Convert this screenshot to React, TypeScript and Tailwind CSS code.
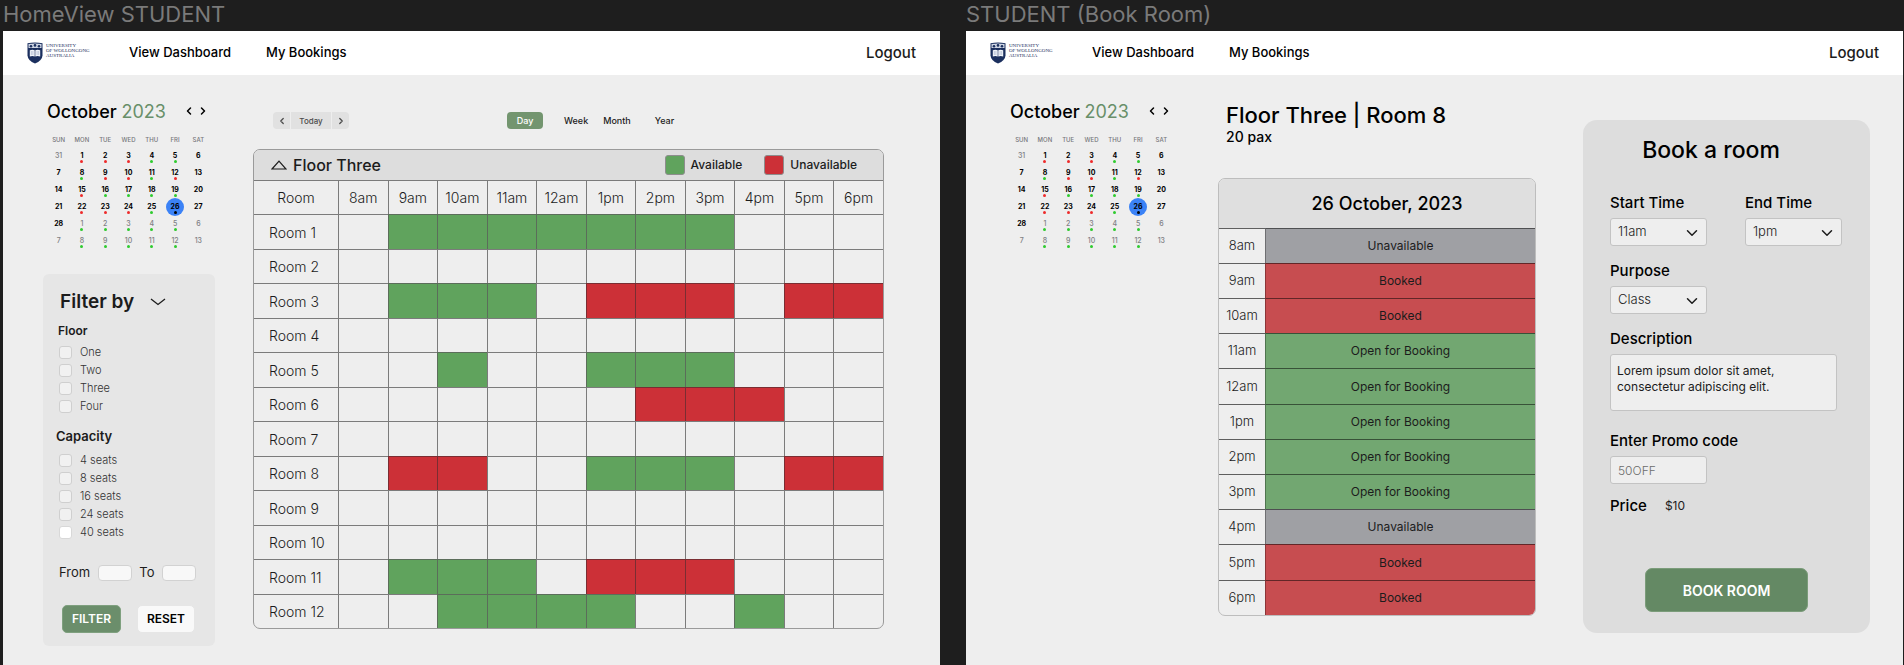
import { ReactNode } from "react";
import { ChevronDown, ChevronLeft, ChevronRight } from "lucide-react";

const hours = ["8am", "9am", "10am", "11am", "12am", "1pm", "2pm", "3pm", "4pm", "5pm", "6pm"];

// One character per hour: "g" is available, "r" is unavailable, "." is empty.
const rooms = [
  ".ggggggg...",
  "...........",
  ".ggg.rrr.rr",
  "...........",
  "..g..ggg...",
  "......rrr..",
  "...........",
  ".rr..ggg.rr",
  "...........",
  "...........",
  ".ggg.rrr...",
  "..gggg..g..",
];

const cellColour: Record<string, string> = {
  g: "border-[#5b6d5a] bg-[#60a35d]",
  r: "border-[#7a2d32] bg-[#cc3037]",
  ".": "border-[#7b7b7b]",
};

type Slot = "Unavailable" | "Booked" | "Open for Booking";

const slots: Slot[] = [
  "Unavailable",
  "Booked",
  "Booked",
  "Open for Booking",
  "Open for Booking",
  "Open for Booking",
  "Open for Booking",
  "Open for Booking",
  "Unavailable",
  "Booked",
  "Booked",
];

const slotColour: Record<Slot, string> = {
  Unavailable: "bg-[#9fa0a4]",
  Booked: "bg-[#c74d50]",
  "Open for Booking": "bg-[#72a771]",
};

const weekdays = ["SUN", "MON", "TUE", "WED", "THU", "FRI", "SAT"];

const weeks = [
  { days: [31, 1, 2, 3, 4, 5, 6], dots: ".rrrgg." },
  { days: [7, 8, 9, 10, 11, 12, 13], dots: ".grrgr." },
  { days: [14, 15, 16, 17, 18, 19, 20], dots: ".rgggg." },
  { days: [21, 22, 23, 24, 25, 26, 27], dots: ".rrrgk." },
  { days: [28, 1, 2, 3, 4, 5, 6], dots: ".ggggg." },
  { days: [7, 8, 9, 10, 11, 12, 13], dots: ".ggggg." },
];

const dotColour: Record<string, string> = {
  r: "bg-[#ee2b2b]",
  g: "bg-[#2fcb2f]",
  k: "bg-black",
};

function isOtherMonth(week: number, day: number) {
  return (week === 0 && day === 31) || (week === 4 && day < 28) || week === 5;
}

function Logo() {
  return (
    <div className="flex w-[69px] items-start gap-[3px] text-[#1b2f5e]">
      <svg viewBox="0 0 16 22" className="h-[22px] w-4 shrink-0" aria-hidden="true">
        <path d="M.5 1.2Q8-.2 15.500 1.200V13.500Q15.200 18.500 8 21.500Q.8 18.500.5 13.500Z" fill="#1b2f5e" />
        <path d="M1.500 2.100Q8 .9 14.500 2.100V6H1.500Z" fill="#cfd6e4" />
        <circle cx="4" cy="4.200" r="1.300" fill="#1b2f5e" />
        <circle cx="8" cy="3.400" r="1.300" fill="#1b2f5e" />
        <circle cx="12" cy="4.200" r="1.300" fill="#1b2f5e" />
        <path d="M2.800 8.200Q5.500 7.200 7.700 8.200V14.500Q5.500 13.600 2.800 14.500ZM8.300 8.200Q10.500 7.200 13.200 8.200V14.500Q10.500 13.600 8.300 14.500Z" fill="#f1f4f9" />
        <path d="M4.300 9V13M5.900 9V13M10.100 9V13M11.700 9V13" stroke="#8c9abb" strokeWidth=".5" />
      </svg>
      <p className="pt-px font-['Liberation_Serif',serif] text-[5px] leading-[5px] whitespace-nowrap">
        UNIVERSITY
        <br />
        OF WOLLONGONG
        <br />
        AUSTRALIA
      </p>
    </div>
  );
}

function Frame({ title, children }: { title: string; children: ReactNode }) {
  return (
    <section className="flex min-w-0 flex-1 flex-col">
      <h2 className="h-[31px] text-[22px] leading-7 text-[#7a7a7a]">{title}</h2>
      <div className="flex flex-1 flex-col bg-[#eeeeee]">
        <header className="flex h-11 items-center bg-white pr-6 pl-6 text-[13px] font-medium text-black">
          <Logo />
          <nav className="flex flex-1 gap-[35px] pl-[33px]">
            <a href="#dashboard">View Dashboard</a>
            <a href="#bookings">My Bookings</a>
          </nav>
          <a href="#logout" className="text-[15px] text-[#1c1c1c]">
            Logout
          </a>
        </header>
        {children}
      </div>
    </section>
  );
}

function Calendar() {
  return (
    <div className="pt-6">
      <div className="flex h-6 items-center pl-1">
        <h3 className="text-[18px] font-medium text-black">
          October <span className="font-normal text-[#688f69]">2023</span>
        </h3>
        <div className="ml-auto flex gap-0.5 pr-1.5">
          <button aria-label="Previous month">
            <ChevronLeft className="size-3 text-black" strokeWidth={3} />
          </button>
          <button aria-label="Next month">
            <ChevronRight className="size-3 text-black" strokeWidth={3} />
          </button>
        </div>
      </div>
      <table className="mt-2.5 ml-1 w-[163px] table-fixed border-separate border-spacing-0 text-center text-[7px] leading-[14px]">
        <thead>
          <tr className="h-3.5 text-[6px] text-[#77777b]">
            {weekdays.map((d) => (
              <th key={d} className="p-0 font-medium">
                {d}
              </th>
            ))}
          </tr>
        </thead>
        <tbody>
          {weeks.map((week, w) => (
            <tr key={w} className="h-[17px]">
              {week.days.map((day, i) => {
                const dot = dotColour[week.dots[i]];
                return (
                  <td
                    key={i}
                    className={
                      isOtherMonth(w, day)
                        ? "relative p-0 font-medium text-[#808084]"
                        : "relative p-0 font-bold text-black"
                    }
                  >
                    {day === 26 && (
                      <span className="absolute inset-x-0 top-0 mx-auto size-[18px] rounded-full bg-[#3b82f6]" />
                    )}
                    <span className="relative block">{day}</span>
                    {dot && (
                      <span className={`absolute inset-x-0 bottom-px mx-auto size-[3px] rounded-full ${dot}`} />
                    )}
                  </td>
                );
              })}
            </tr>
          ))}
        </tbody>
      </table>
    </div>
  );
}

function CheckList({ items, lastWhite = false }: { items: string[]; lastWhite?: boolean }) {
  return (
    <ul className="pl-4">
      {items.map((item, i) => (
        <li key={item}>
          <label className="flex h-[18px] items-center gap-2 text-[11px] font-light text-[#333333]">
            <input
              type="checkbox"
              className={
                lastWhite && i === items.length - 1
                  ? "size-[13px] appearance-none rounded-[3px] border border-[#d8d8d8] bg-white"
                  : "size-[13px] appearance-none rounded-[3px] border border-[#cfcfcf] bg-[#f1f1f1]"
              }
            />
            {item}
          </label>
        </li>
      ))}
    </ul>
  );
}

function FilterPanel() {
  return (
    <form className="mt-[25px] rounded-md bg-[#e6e6e6] pt-[17px] pb-[13px] text-[#1c1c1c]">
      <div className="flex h-[22px] items-center gap-4 pl-[17px]">
        <h3 className="text-[19px] font-semibold">Filter by</h3>
        <button type="button" aria-label="Collapse filters">
          <svg viewBox="0 0 16 8" className="h-2 w-4" fill="none" stroke="currentColor" strokeWidth="1.300">
            <path d="M1 1L8 6.500L15 1" />
          </svg>
        </button>
      </div>
      <h4 className="mt-2.5 mb-1 pl-[15px] text-[12px] leading-4 font-semibold">Floor</h4>
      <CheckList items={["One", "Two", "Three", "Four"]} />
      <h4 className="mt-[13px] mb-[7px] pl-[13px] text-[13px] leading-4 font-semibold">Capacity</h4>
      <CheckList items={["4 seats", "8 seats", "16 seats", "24 seats", "40 seats"]} lastWhite />
      <div className="mt-6 flex h-4 items-center justify-between pr-[19px] pl-4 text-[13px]">
        <label htmlFor="from">From</label>
        <input id="from" className="h-4 w-[34px] rounded border border-[#d2d2d2] bg-[#f8f8f8] px-1" />
        <label htmlFor="to">To</label>
        <input id="to" className="h-4 w-[34px] rounded border border-[#d2d2d2] bg-[#f8f8f8] px-1" />
      </div>
      <div className="mt-6 flex justify-between pr-5 pl-[19px] text-[12px] font-semibold">
        <button type="button" className="h-7 w-[59px] rounded-[5px] border border-[#7fa07f] bg-[#6b8e6b] text-white">
          FILTER
        </button>
        <button type="reset" className="h-7 w-[58px] rounded-[5px] border border-[#e6e6e6] bg-[#f9f9f9] text-black">
          RESET
        </button>
      </div>
    </form>
  );
}

function ViewBar() {
  return (
    <div className="flex h-[17px] items-stretch pl-5 text-[9px] font-medium">
      <div className="flex gap-px text-[8px] text-[#4d4d4d]">
        <button aria-label="Previous day" className="flex w-[17px] items-center justify-center rounded-l bg-[#e1e1e1]">
          <ChevronLeft className="size-2.5" strokeWidth={3} />
        </button>
        <button className="w-10 bg-[#e1e1e1]">Today</button>
        <button aria-label="Next day" className="flex w-[17px] items-center justify-center rounded-r bg-[#e1e1e1]">
          <ChevronRight className="size-2.5" strokeWidth={3} />
        </button>
      </div>
      <div className="ml-[158px] flex items-stretch text-[#1c1c1c]">
        <button className="w-9 rounded bg-[#73956f] text-white">Day</button>
        <button className="ml-[21px]">Week</button>
        <button className="ml-[15px]">Month</button>
        <button className="ml-6">Year</button>
      </div>
    </div>
  );
}

function RoomGrid() {
  return (
    <div className="mt-5 overflow-hidden rounded-[7px] border border-[#9a9a9a] text-[#1c1c1c]">
      <div className="flex h-[30px] items-center bg-[#dddddd] pr-[26px] pl-[17px]">
        <svg viewBox="0 0 16 10" className="h-2.5 w-4" fill="none" stroke="currentColor" strokeWidth="1.200">
          <path d="M1 9L8 1.200L15 9Z" />
        </svg>
        <h3 className="flex-1 pl-1.5 text-[16px] font-medium">Floor Three</h3>
        <div className="flex items-center text-[12px] font-medium">
          <span className="mr-1.5 size-5 rounded-[3px] border border-[#8d8d8d] bg-[#60a35d]" />
          Available
          <span className="mr-1.5 ml-[22px] size-5 rounded-[3px] border border-[#8d8d8d] bg-[#cc3037]" />
          Unavailable
        </div>
      </div>
      <table className="w-full table-fixed border-separate border-spacing-0 text-[14px] font-light">
        <colgroup>
          <col className="w-[84px]" />
        </colgroup>
        <thead>
          <tr className="h-[34px]">
            <th className="border-t border-[#7b7b7b] p-0 font-light">Room</th>
            {hours.map((h) => (
              <th key={h} className="border-t border-l border-[#7b7b7b] p-0 font-light">
                {h}
              </th>
            ))}
          </tr>
        </thead>
        <tbody>
          {rooms.map((row, r) => (
            <tr key={r} className="odd:h-[35px] even:h-[34px]">
              <th scope="row" className="border-t border-[#7b7b7b] p-0 pl-[15px] text-left font-light">
                Room {r + 1}
              </th>
              {row.split("").map((c, i) => (
                <td key={i} className={`border-t border-l p-0 ${cellColour[c]}`} />
              ))}
            </tr>
          ))}
        </tbody>
      </table>
    </div>
  );
}

function DaySchedule() {
  return (
    <div className="mt-[33px] overflow-hidden rounded-[7px] border border-[#bdbdbd]">
      <h3 className="h-[49px] bg-[#dfdfdf] pl-5 text-center text-[18px] leading-[49px] font-medium text-black">
        26 October, 2023
      </h3>
      <table className="w-full table-fixed border-separate border-spacing-0 text-center text-[12px] text-[#1c1c1c]">
        <colgroup>
          <col className="w-[46px]" />
        </colgroup>
        <tbody>
          {slots.map((slot, i) => (
            <tr key={i} className="h-[35px] nth-[5n]:h-9">
              <th scope="row" className="border-t border-black/60 p-0 text-[13px] font-light">
                {hours[i]}
              </th>
              <td className={`border-t border-l border-t-black/50 border-l-black/30 p-0 ${slotColour[slot]}`}>
                {slot}
              </td>
            </tr>
          ))}
        </tbody>
      </table>
    </div>
  );
}

function SelectField({ id, label, options }: { id: string; label: string; options: string[] }) {
  return (
    <div className="w-[97px]">
      <label htmlFor={id} className="block text-[15px] leading-5 font-medium whitespace-nowrap text-black">
        {label}
      </label>
      <div className="relative mt-[5px]">
        <select
          id={id}
          className="h-7 w-full appearance-none rounded-[3px] border border-[#c3c3c3] bg-[#eeeeee] pl-[7px] text-[13px] font-light text-[#1c1c1c]"
        >
          {options.map((o) => (
            <option key={o}>{o}</option>
          ))}
        </select>
        <ChevronDown
          className="pointer-events-none absolute top-1.5 right-1.5 size-[18px] text-[#1c1c1c]"
          strokeWidth={2}
        />
      </div>
    </div>
  );
}

function BookingForm() {
  return (
    <form className="mt-[45px] w-[287px] shrink-0 self-start rounded-[14px] bg-[#dddddd] px-[27px] pt-4 pb-[21px]">
      <h3 className="pr-[31px] text-center text-[23px] leading-7 font-medium text-black">Book a room</h3>
      <div className="mt-[29px] flex gap-[38px]">
        <SelectField id="start" label="Start Time" options={["11am", "12am", "1pm"]} />
        <SelectField id="end" label="End Time" options={["1pm", "2pm", "3pm"]} />
      </div>
      <div className="mt-[15px]">
        <SelectField id="purpose" label="Purpose" options={["Class", "Meeting"]} />
      </div>
      <label htmlFor="description" className="mt-[15px] block text-[15px] leading-5 font-medium text-black">
        Description
      </label>
      <textarea
        id="description"
        defaultValue="Lorem ipsum dolor sit amet, consectetur adipiscing elit."
        className="mt-[5px] block h-[57px] w-[227px] resize-none rounded-[3px] border border-[#c3c3c3] bg-[#eeeeee] py-2 pr-12 pl-1.5 text-[12px] leading-4 text-[#1c1c1c]"
      />
      <label htmlFor="promo" className="mt-5 block text-[15px] leading-5 font-medium text-black">
        Enter Promo code
      </label>
      <input
        id="promo"
        placeholder="50OFF"
        className="mt-[5px] block h-7 w-[97px] rounded-[3px] border border-[#c3c3c3] bg-[#eeeeee] px-[7px] text-[12px] font-light placeholder:text-[#6b6b6b]"
      />
      <p className="mt-3 flex gap-[18px] text-[15px] leading-5 font-medium text-black">
        Price <span className="text-[12px] font-normal text-[#1c1c1c]">$10</span>
      </p>
      <button
        type="button"
        className="mx-auto mt-[52px] block h-11 w-[163px] rounded-[7px] border border-[#7b9c7a] bg-[#648964] text-[14px] font-semibold text-white"
      >
        BOOK ROOM
      </button>
    </form>
  );
}

export default function App() {
  return (
    <main className="flex min-h-screen gap-[26px] bg-[#1e1e1e] pr-px pl-[3px] font-['Inter',sans-serif]">
      <Frame title="HomeView STUDENT">
        <div className="flex gap-[38px] pr-14 pl-10">
          <aside className="w-[172px] shrink-0">
            <Calendar />
            <FilterPanel />
          </aside>
          <div className="min-w-0 flex-1 pt-[37px]">
            <ViewBar />
            <RoomGrid />
          </div>
        </div>
      </Frame>
      <Frame title="STUDENT (Book Room)">
        <div className="flex pr-[33px] pl-10">
          <aside className="w-[172px] shrink-0">
            <Calendar />
          </aside>
          <div className="mr-[47px] ml-10 min-w-0 flex-1 pt-[26px]">
            <h2 className="pl-2 text-[22px] leading-7 font-medium text-black">Floor Three | Room 8</h2>
            <p className="pl-2 text-[14px] leading-4 font-medium text-black">20 pax</p>
            <DaySchedule />
          </div>
          <BookingForm />
        </div>
      </Frame>
    </main>
  );
}
